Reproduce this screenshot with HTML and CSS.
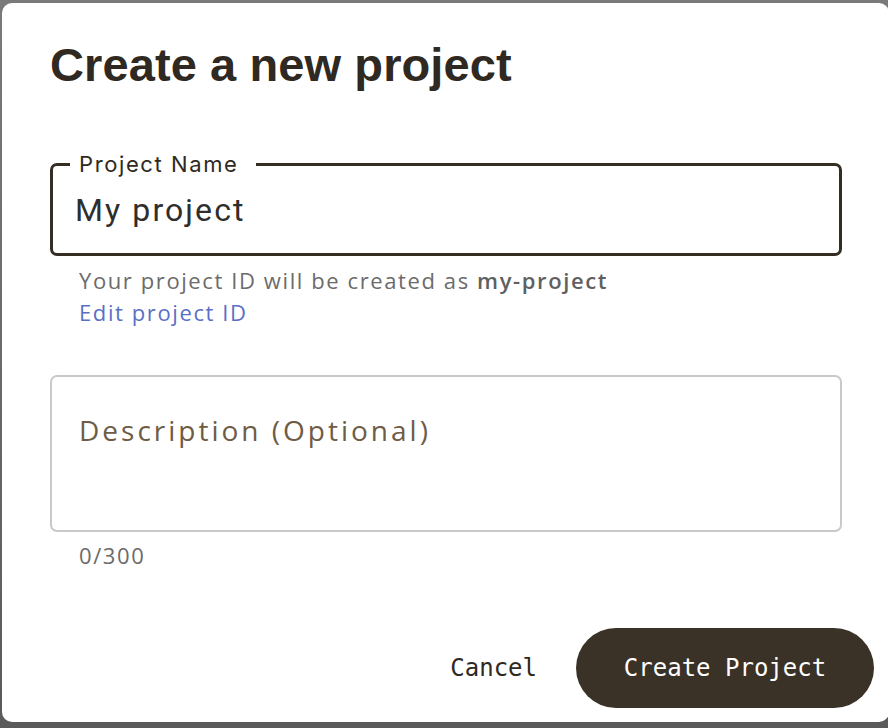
FILE: index.html
```html
<!DOCTYPE html>
<html lang="en">
<head>
<meta charset="utf-8">
<title>Create a new project</title>
<link rel="stylesheet" href="styles.css">
</head>
<body>
<div class="dialog">
  <h1 class="title">Create a new project</h1>
  <div class="field">
    <span class="field-label">Project Name</span>
    <span class="field-value">My project</span>
  </div>
  <div class="helper">
    <div>Your project ID will be created as <b>my-project</b></div>
    <div class="link">Edit project ID</div>
  </div>
  <div class="textarea">
    <span class="placeholder">Description (Optional)</span>
  </div>
  <div class="counter">0/300</div>
  <div class="actions">
    <span class="btn-text">Cancel</span>
    <span class="btn-primary">Create Project</span>
  </div>
</div>
</body>
</html>
```

FILE: styles.css
```css
html, body {
  margin: 0;
  padding: 0;
}
body {
  width: 888px;
  height: 728px;
  overflow: hidden;
  background: linear-gradient(#7a7a7a, #5a5a5a);
}
.dialog {
  box-sizing: border-box;
  margin: 3px 0 0 2px;
  width: 887px;
  height: 719px;
  background: #fff;
  border-radius: 10px;
  padding: 34px 47px 0 48px;
  display: flex;
  flex-direction: column;
}
.title {
  margin: 0;
  font-family: "Liberation Sans", Arial, sans-serif;
  font-weight: 700;
  font-size: 47px;
  line-height: 56px;
  color: #2f2921;
  letter-spacing: 0.1px;
}
.field {
  position: relative;
  box-sizing: border-box;
  margin-top: 70px;
  height: 93px;
  border: 3px solid #342d24;
  border-radius: 7px;
  display: flex;
  align-items: center;
  padding-left: 22px;
}
.field-label {
  position: absolute;
  left: 17px;
  top: -15px;
  padding: 0 17px 0 9px;
  background: #fff;
  font-family: Inter, Roboto, sans-serif;
  font-size: 22px;
  line-height: 26px;
  letter-spacing: 1.6px;
  color: #2f2921;
}
.field-value {
  font-family: Roboto, "Noto Sans", sans-serif;
  font-size: 32px;
  line-height: 40px;
  letter-spacing: 2.1px;
  color: #2e2e2e;
}
.helper {
  margin-top: 8px;
  padding-left: 29px;
  font-family: "Open Sans", "Noto Sans", sans-serif;
  font-size: 22px;
  line-height: 32px;
  color: #6b6b6b;
  letter-spacing: 1.6px;
}
.helper b {
  font-weight: 600;
  color: #606060;
}
.link {
  color: #5a6fc6;
}
.textarea {
  box-sizing: border-box;
  margin-top: 47px;
  height: 157px;
  border: 2px solid #c9c9c9;
  border-radius: 7px;
  padding: 36px 0 0 27px;
}
.placeholder {
  font-family: "Open Sans", "Noto Sans", sans-serif;
  font-size: 28px;
  line-height: 34px;
  letter-spacing: 3px;
  color: #6e5c45;
}
.counter {
  margin-top: 7px;
  padding-left: 29px;
  font-family: "Open Sans", "Noto Sans", sans-serif;
  font-size: 22px;
  line-height: 32px;
  color: #6b6b6b;
  letter-spacing: 1.6px;
}
.actions {
  margin-top: 57px;
  margin-right: -32px;
  display: flex;
  justify-content: flex-end;
  align-items: center;
  gap: 39px;
}
.btn-text {
  font-family: "DejaVu Sans Mono", "Liberation Mono", monospace;
  font-size: 24px;
  color: #2f2921;
}
.btn-primary {
  box-sizing: border-box;
  height: 80px;
  width: 298px;
  border-radius: 40px;
  background: #3a3127;
  color: #fff;
  display: flex;
  align-items: center;
  justify-content: center;
  font-family: "DejaVu Sans Mono", "Liberation Mono", monospace;
  font-size: 24px;
}
```
